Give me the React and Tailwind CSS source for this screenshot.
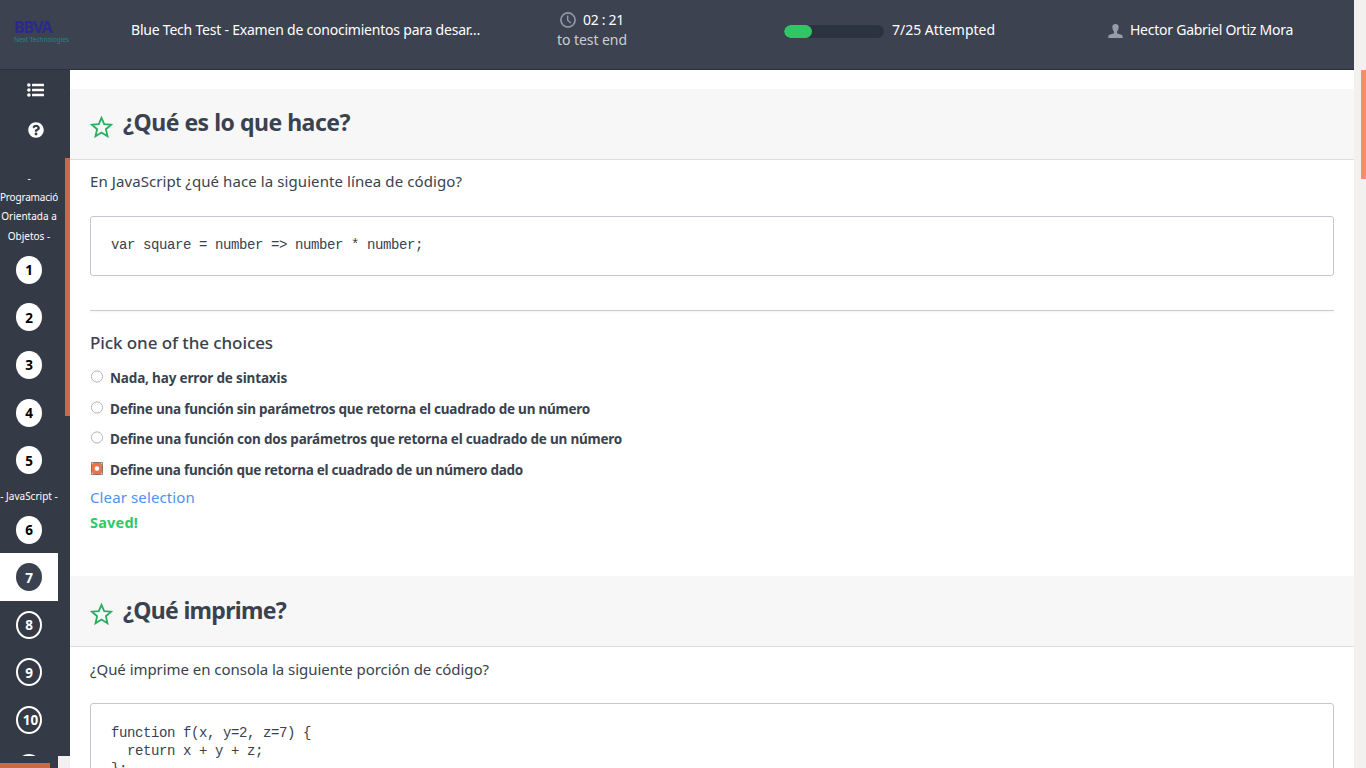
import { FaQuestionCircle } from "react-icons/fa";

const OPTIONS = [
  { text: "Nada, hay error de sintaxis", track: "tracking-[-0.155px]" },
  { text: "Define una función sin parámetros que retorna el cuadrado de un número", track: "tracking-[-0.23px]" },
  { text: "Define una función con dos parámetros que retorna el cuadrado de un número", track: "tracking-[-0.215px]" },
  { text: "Define una función que retorna el cuadrado de un número dado", track: "tracking-[-0.252px]", checked: true },
];

function ListIcon() {
  return (
    <svg className="mt-[13px] h-[14px] w-[17px] shrink-0" viewBox="0 0 17 14" fill="#fff">
      <circle cx="1.9" cy="2" r="1.8" />
      <circle cx="1.9" cy="7" r="1.8" />
      <circle cx="1.9" cy="12" r="1.8" />
      <rect x="5" y="0.8" width="12" height="2.5" rx="0.4" />
      <rect x="5" y="5.8" width="12" height="2.5" rx="0.4" />
      <rect x="5" y="10.8" width="12" height="2.5" rx="0.4" />
    </svg>
  );
}

function Clock() {
  return (
    <svg className="h-4 w-4" viewBox="0 0 16 16" fill="none" stroke="#8f98a8">
      <circle cx="8" cy="8" r="7.1" strokeWidth="1.7" />
      <path d="M7.7 3.6V8.2L10.8 11" strokeWidth="1.4" />
    </svg>
  );
}

function Person() {
  return (
    <svg className="h-[14px] w-[15px]" viewBox="0 0 15 14" fill="#959dac">
      <path d="M7.5 0C5.1 0 4.2 1.4 4.4 3.6C4.5 5.4 5 6.4 5.9 7.4V9.3C5.4 10.4 0.6 10.1 0.3 12.3V14H14.7V12.3C14.4 10.1 9.6 10.4 9.1 9.3V7.4C10 6.4 10.5 5.4 10.6 3.6C10.8 1.4 9.9 0 7.5 0Z" />
    </svg>
  );
}

function Star() {
  return (
    <svg className="mt-[26.5px] h-[22px] w-[23px] shrink-0" viewBox="0 0 23 22" fill="none" stroke="#27ae60" strokeWidth="1.8">
      <path d="M11.5 1.8L14.2 8.1L21.2 8.7L15.9 13.2L17.5 20.3L11.5 16.6L5.5 20.3L7.1 13.2L1.8 8.7L8.8 8.1Z" />
    </svg>
  );
}

function Radio({ checked }) {
  if (checked) {
    return (
      <svg className="h-[13px] w-[14px]" viewBox="0 0 14 13">
        <rect x="1.5" y="0.5" width="11" height="12" rx="4" fill="#e9754a" />
        <circle cx="7" cy="6.5" r="2.3" fill="#fff" />
        <rect x="1.5" y="0.5" width="11" height="12" fill="none" stroke="#222" strokeDasharray="1 1" />
      </svg>
    );
  }
  return (
    <svg className="h-[13px] w-[14px]" viewBox="0 0 14 13">
      <circle cx="7" cy="6.5" r="5.6" fill="#fff" stroke="#b4b4b4" />
    </svg>
  );
}

function Bubble({ n }) {
  const active = n === 7;
  const answered = n < 7;
  return (
    <div className={"flex h-[47.65px] w-[58px] shrink-0 items-center justify-center " + (active ? "bg-white" : "")}>
      <span
        className={
          "flex h-[28px] w-[26px] items-center justify-center rounded-[50%] pt-px text-[13.5px] font-bold " +
          (active
            ? "bg-[#3b424f] text-white"
            : answered
              ? "bg-white text-black"
              : "border-2 border-white text-white " + (n > 9 ? "pl-[3px]" : ""))
        }
      >
        {n}
      </span>
    </div>
  );
}

function Heading({ children, className }) {
  return (
    <div className="flex h-[71px] shrink-0 border-b border-[#dddddd] bg-[#f7f7f7] pl-5">
      <Star />
      <h2 className={"ml-2.5 whitespace-nowrap text-[23px] leading-8 font-bold " + className}>{children}</h2>
    </div>
  );
}

export default function App() {
  return (
    <div className="flex h-screen w-full overflow-hidden bg-white font-['Noto_Sans','Open_Sans',sans-serif] text-[#39424e]">
      <div className="flex w-[1354px] shrink-0 flex-col">
        <header className="flex h-[70px] shrink-0 border-b border-[#2a313d] bg-[#3c424f] text-sm leading-5 text-white">
          <div className="w-[131px] pt-5 pl-[14px]">
            <div className="h-[15px] text-[16px] leading-[15px] font-bold tracking-[-1.2px] text-[#2b2a8c]">BBVA</div>
            <div className="h-[10px] whitespace-nowrap text-[6.5px] leading-[9px] tracking-[-0.05px] text-[#158a8a]">Next Technologies</div>
          </div>
          <div className="w-[426px] pt-5 whitespace-nowrap tracking-[-0.216px]">
            Blue Tech Test - Examen de conocimientos para desar…
          </div>
          <div className="w-[227px] pt-2.5">
            <div className="flex h-5 items-center gap-[7px] pl-[3px]">
              <Clock />
              <span className="tracking-[-0.3px]">02 : 21</span>
            </div>
            <div className="tracking-[-0.06px] text-[#cbced3]">to test end</div>
          </div>
          <div className="flex w-[323px] pt-5">
            <div className="mt-[5px] h-[13px] w-[100px] overflow-hidden rounded-full bg-[#2b3340]">
              <div className="h-full w-[28px] rounded-full bg-[#30c665]" />
            </div>
            <span className="ml-2">7/25 Attempted</span>
          </div>
          <div className="flex pt-5">
            <div className="mt-1 mr-[7px] ml-px"><Person /></div>
            <span className="whitespace-nowrap tracking-[-0.25px]">Hector Gabriel Ortiz Mora</span>
          </div>
        </header>

        <div className="flex min-h-0 flex-1">
          <aside className="flex w-[70px] shrink-0 flex-col bg-[#353b46] text-white">
            <div className="flex h-[88px] shrink-0 flex-col items-center pl-px">
              <ListIcon />
              <FaQuestionCircle className="mt-[25px] h-4 w-4" />
            </div>
            <div className="flex h-[598px] shrink-0">
              <div className="flex w-[58px] flex-col overflow-hidden">
                <div className="flex h-[88px] shrink-0 flex-col items-center pt-[10px] text-[10px] leading-5 whitespace-nowrap">
                  <span className="h-5">-</span>
                  <span className="h-5 w-[58px] overflow-hidden leading-[19px] tracking-[-0.19px]">Programació</span>
                  <span className="h-5">Orientada a</span>
                  <span className="h-5">Objetos -</span>
                </div>
                {[1, 2, 3, 4, 5].map((n) => <Bubble key={n} n={n} />)}
                <div className="h-[21.5px] shrink-0 text-center text-[10px] leading-[24px] whitespace-nowrap">- JavaScript -</div>
                {[6, 7, 8, 9, 10, 11].map((n) => <Bubble key={n} n={n} />)}
              </div>
              <div className="ml-auto h-[258px] w-[5px] bg-[#c96a45]" />
            </div>
            <div className="flex h-3 shrink-0 items-end">
              <div className="h-[5px] w-[50px] bg-[#c96a45]" />
              <div className="ml-auto h-3 w-3 bg-[#f2f1f0]" />
            </div>
          </aside>

          <main className="flex min-w-0 flex-1 flex-col overflow-hidden pt-[19px]">
            <section className="flex h-[487px] shrink-0 flex-col">
              <Heading className="mt-[17px] tracking-[-0.49px]">¿Qué es lo que hace?</Heading>
              <div className="px-5">
                <p className="mt-[11px] text-[15px] leading-5 tracking-[0.087px]">En JavaScript ¿qué hace la siguiente línea de código?</p>
                <pre className="mt-[25px] h-[60px] rounded-[3px] border border-[#c2c7d0] px-5 pt-[19px] font-['Liberation_Mono',monospace] text-[14px] leading-[18px] tracking-[-0.4px]">var square = number =&gt; number * number;</pre>
                <hr className="mt-[34px] border-[#cccccc] shadow-[0_1px_2px_rgba(0,0,0,0.08)]" />
                <h3 className="mt-5 text-[17px] leading-6 font-medium tracking-[-0.088px]">Pick one of the choices</h3>
                <div className="mt-2">
                  {OPTIONS.map((o) => (
                    <label key={o.text} className="flex h-[30.65px] items-start whitespace-nowrap">
                      <span className="mt-[7px]"><Radio checked={o.checked} /></span>
                      <span className={"ml-[6px] pt-[5px] text-[13.5px] leading-5 font-bold " + o.track}>{o.text}</span>
                    </label>
                  ))}
                </div>
                <a className="mt-px block text-[15px] leading-5 tracking-[0.12px] text-[#4c93f5]">Clear selection</a>
                <div className="mt-[5px] text-[14.5px] leading-5 font-bold tracking-[0.2px] text-[#2ec866]">Saved!</div>
              </div>
            </section>
            <section className="flex shrink-0 flex-col">
              <Heading className="mt-[18px] tracking-[-0.69px]">¿Qué imprime?</Heading>
              <div className="px-5">
                <p className="mt-3 text-[15px] leading-5 tracking-[-0.044px]">¿Qué imprime en consola la siguiente porción de código?</p>
                <pre className="mt-6 h-[120px] rounded-[3px] border border-[#c2c7d0] px-5 pt-5 font-['Liberation_Mono',monospace] text-[14px] leading-[18px] tracking-[-0.4px]">{"function f(x, y=2, z=7) {\n  return x + y + z;\n};"}</pre>
              </div>
            </section>
          </main>
        </div>
      </div>
      <div className="flex flex-1 justify-end bg-[#f2f1f0] pt-[70px]">
        <div className="h-[109px] w-[5px] rounded-l-[1px] bg-[#f28e69]" />
      </div>
    </div>
  );
}
